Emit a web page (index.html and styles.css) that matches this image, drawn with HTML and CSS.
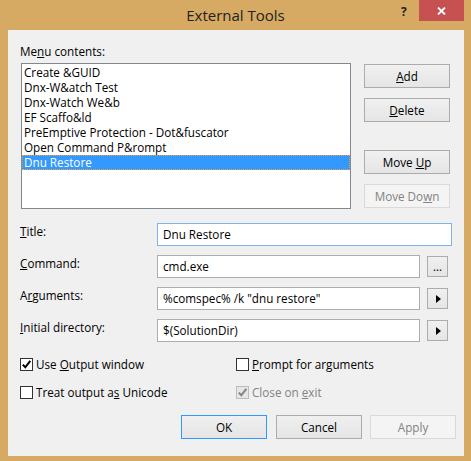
FILE: index.html
```html
<!DOCTYPE html>
<html>
<head>
<meta charset="utf-8">
<title>External Tools</title>
<link rel="stylesheet" href="styles.css">
</head>
<body>
<div class="window">
  <div class="titlebar">
    <div class="title">External Tools</div>
    <div class="help">?</div>
    <div class="close">
      <svg width="9" height="8" viewBox="0 0 9 8"><path d="M1 0.5 L8 7.5 M8 0.5 L1 7.5" stroke="#fff" stroke-width="1.8" fill="none"/></svg>
    </div>
  </div>
  <div class="client">
    <div class="caption">Me<u>n</u>u contents:</div>
    <div class="list-row">
      <ul class="listbox">
        <li class="item">Create &amp;GUID</li>
        <li class="item">Dnx-W&amp;atch Test</li>
        <li class="item">Dnx-Watch We&amp;b</li>
        <li class="item">EF Scaffo&amp;ld</li>
        <li class="item">PreEmptive Protection - Dot&amp;fuscator</li>
        <li class="item">Open Command P&amp;rompt</li>
        <li class="item selected">Dnu Restore</li>
      </ul>
      <div class="side">
        <div class="btn"><u>A</u>dd</div>
        <div class="btn gap10"><u>D</u>elete</div>
        <div class="btn gap28">Move <u>U</u>p</div>
        <div class="btn gap10 disabled">Move Do<u>w</u>n</div>
      </div>
    </div>
    <div class="form">
      <div class="label"><u>T</u>itle:</div>
      <div class="field focus wide">Dnu Restore</div>

      <div class="label"><u>C</u>ommand:</div>
      <div class="field">cmd.exe</div>
      <div class="sbtn dots">...</div>

      <div class="label">A<u>r</u>guments:</div>
      <div class="field">%comspec% /k "dnu restore"</div>
      <div class="sbtn"><svg width="5" height="8" viewBox="0 0 5 8"><path d="M0 0 L5 4 L0 8 Z" fill="#000"/></svg></div>

      <div class="label"><u>I</u>nitial directory:</div>
      <div class="field">$(SolutionDir)</div>
      <div class="sbtn"><svg width="5" height="8" viewBox="0 0 5 8"><path d="M0 0 L5 4 L0 8 Z" fill="#000"/></svg></div>
    </div>
    <div class="checks">
      <div class="check">
        <span class="cb"><svg width="11" height="11" viewBox="0 0 11 11"><path d="M1.8 5.6 L4.3 8.3 L9.3 1.8" stroke="#000" stroke-width="2" fill="none"/></svg></span>
        <span>Use <u>O</u>utput window</span>
      </div>
      <div class="check">
        <span class="cb"></span>
        <span><u>P</u>rompt for arguments</span>
      </div>
      <div class="check">
        <span class="cb"></span>
        <span>Treat output a<u>s</u> Unicode</span>
      </div>
      <div class="check disabled">
        <span class="cb"><svg width="11" height="11" viewBox="0 0 11 11"><path d="M1.8 5.6 L4.3 8.3 L9.3 1.8" stroke="#838383" stroke-width="2" fill="none"/></svg></span>
        <span>Close on <u>e</u>xit</span>
      </div>
    </div>
    <div class="actions">
      <div class="btn default">OK</div>
      <div class="btn">Cancel</div>
      <div class="btn disabled">Apply</div>
    </div>
  </div>
</div>
</body>
</html>
```
FILE: styles.css
```css
* { box-sizing: border-box; }
html, body { margin: 0; padding: 0; }
body {
  width: 471px;
  height: 461px;
  overflow: hidden;
  font-family: "Open Sans", "Noto Sans", sans-serif;
  font-size: 11.7px;
  color: #000;
}
u { text-decoration: underline; text-underline-offset: 1px; }

.window {
  width: 471px;
  height: 461px;
  background: #D6AA63;
  display: flex;
  flex-direction: column;
}
.titlebar {
  height: 30px;
  flex: none;
  position: relative;
}
.title {
  text-align: center;
  font-size: 15px;
  line-height: 30px;
  color: #222;
}
.help {
  position: absolute;
  left: 401px;
  top: 3px;
  font-size: 12px;
  font-weight: bold;
  color: #222;
}
.close {
  position: absolute;
  left: 419px;
  top: 0;
  width: 45px;
  height: 21px;
  background: #C75050;
  display: flex;
  align-items: center;
  justify-content: center;
}

.client {
  margin-left: 8px;
  width: 456px;
  height: 426px;
  background: #F0F0F0;
  padding: 14px 0 0 12px;
}
.caption { line-height: 15px; }

.list-row {
  display: flex;
  margin-top: 4px;
  margin-left: 1px;
}
.listbox {
  width: 330px;
  height: 146px;
  margin: 0;
  padding: 1px 0 0 0;
  list-style: none;
  border: 1px solid #828790;
  background: #fff;
}
.item {
  height: 15px;
  line-height: 15px;
  padding-left: 2px;
  white-space: nowrap;
}
.item.selected {
  background: #3399FF;
  color: #fff;
  outline: 1px dotted #F0A030;
  outline-offset: -1px;
}
.side {
  display: flex;
  flex-direction: column;
  margin-left: 13px;
  margin-top: 1px;
}
.btn {
  width: 86px;
  height: 24px;
  border: 1px solid #ACACAC;
  background: linear-gradient(#F0F0F0, #E5E5E5);
  line-height: 22px;
  text-align: center;
}
.btn.gap10 { margin-top: 10px; }
.btn.gap28 { margin-top: 28px; }
.btn.disabled {
  border-color: #D9D9D9;
  background: #F4F4F4;
  color: #838383;
}
.btn.default { border-color: #3399FF; }

.form {
  display: grid;
  grid-template-columns: 137px 263px 28px 4px;
  grid-auto-rows: 23px;
  row-gap: 9px;
  margin-top: 14px;
}
.label {
  grid-column: 1;
  line-height: 15px;
  padding-top: 1px;
  white-space: nowrap;
}
.field {
  grid-column: 2;
  height: 23px;
  border: 1px solid #ABADB3;
  background: #fff;
  padding-left: 5px;
  line-height: 21px;
  white-space: nowrap;
}
.field.wide { grid-column: 2 / 5; }
.field.focus { border-color: #7EB4EA; }
.sbtn {
  grid-column: 3;
  justify-self: end;
  align-self: center;
  width: 21px;
  height: 21px;
  border: 1px solid #ACACAC;
  background: linear-gradient(#F0F0F0, #E5E5E5);
  display: flex;
  align-items: center;
  justify-content: center;
}
.sbtn svg { margin-left: 1px; }
.sbtn.dots {
  align-items: flex-end;
  line-height: 15px;
  padding-bottom: 2px;
}

.checks {
  display: grid;
  grid-template-columns: 216px auto;
  grid-auto-rows: 15px;
  row-gap: 13px;
  margin-top: 15px;
}
.check {
  display: flex;
  align-items: center;
  line-height: 15px;
  white-space: nowrap;
}
.cb {
  width: 13px;
  height: 13px;
  border: 1px solid #333;
  background: #fff;
  margin-right: 3px;
  display: flex;
  align-items: center;
  justify-content: center;
}
.check.disabled { color: #838383; }
.check.disabled .cb {
  border-color: #BCBCBC;
  background: #E6E6E6;
}

.actions {
  display: flex;
  justify-content: flex-end;
  gap: 8px;
  margin-top: 15px;
  padding-right: 8px;
}
.actions .default { margin-right: 1px; }
```
